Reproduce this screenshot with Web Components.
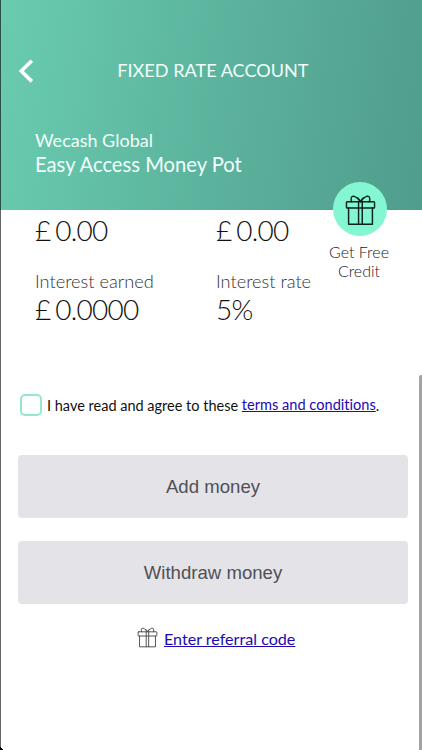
<!DOCTYPE html>
<html lang="en"><head><meta charset="utf-8"><title>Fixed rate account</title>
<style>html,body{margin:0;height:100%;overflow:hidden;background:#fff}</style></head>
<body><account-page></account-page>
<script>
const define=(name,html)=>customElements.define(name,class extends HTMLElement{
  constructor(){super();this.attachShadow({mode:'open'}).innerHTML=html;}
});
define('gift-icon',`<style>:host{display:block}svg{display:block;width:100%;height:100%}</style>
<svg viewBox="0 0 32 34" fill="none" stroke="currentColor" stroke-width="var(--stroke,1.5)" stroke-linejoin="round" stroke-linecap="round">
<rect x="1.5" y="9" width="29" height="6.5" rx=".8"/><path d="M3.7 15.5V32.2H28.3V15.5M14 9V32M17.8 9V32M16 9C12 3.5 6.5 .8 6.3 6.2C6.2 7.3 6.5 8.2 7 9M16 9C20 3.5 25.3 .8 25.6 6.2C25.7 7.3 25.4 8.2 25 9M16 8.5L13.2 5M16 8.5L18.8 5"/></svg>`);
define('top-bar',`<style>:host{display:grid;grid-template-columns:117.3px 1fr;align-items:center;height:30px}
svg{margin:2px 0 0 17px;width:18px;height:26px;display:block}span{font-size:18.1px;line-height:30px;white-space:nowrap}</style>
<svg viewBox="0 0 18 26" fill="none" stroke="#fff" stroke-width="3.6"><path d="M14.8 2.8L4.3 13L14.8 23.4"/></svg><span><slot></slot></span>`);
define('account-header',`<style>:host{display:block;height:210px;box-sizing:border-box;padding-top:55px;color:#f2fffb;background:linear-gradient(98deg,#6acbb0 0%,#65c5aa 15%,#5bb19c 55%,#509d8c 100%)}
.a{margin:43px 0 0 35px;font-size:18px;line-height:25px}.b{margin:-1px 0 0 35px;font-size:20.2px;line-height:24px}span{white-space:nowrap}</style>
<top-bar>FIXED RATE ACCOUNT</top-bar><div class="a"><span><slot name="provider"></slot></span></div><div class="b"><span><slot name="product"></slot></span></div>`);
define('stat-item',`<style>:host{display:block;font-weight:300}.l{font-size:18.2px;line-height:24px;height:24px;color:#333}.v{margin:-1px 0 1px;font-size:28px;line-height:34px;letter-spacing:-.75px;word-spacing:-2px;color:#111}span{white-space:nowrap}</style>
<div class="l"><span><slot name="label"></slot></span></div><div class="v"><span><slot></slot></span></div>`);
define('free-credit',`<style>:host{display:flex;flex-direction:column;align-items:center;width:80px;font-weight:300;font-size:16px;line-height:19px;text-align:center;color:#222}
.c{width:54px;height:54px;border-radius:50%;background:#84f7d2;display:grid;place-items:center;margin-bottom:6px}gift-icon{width:31px;height:33px;color:#0c221c}::slotted(div){margin-left:-2px}</style>
<div class="c"><gift-icon></gift-icon></div><slot></slot>`);
define('terms-row',`<style>:host{display:flex;align-items:center;height:24px;font-size:14.5px;font-variant-ligatures:none;color:#111;white-space:nowrap}i{box-sizing:border-box;width:22px;height:22px;border:2px solid #92e9cb;border-radius:5px;margin-right:5px}
a{color:#2009b5;text-decoration:underline;font-size:14.6px;margin:-2px 0 0 3.7px}</style><i></i><span><slot></slot></span><a><slot name="link"></slot></a><span>.</span>`);
define('action-button',`<style>:host{display:grid;place-items:center;height:63px;border-radius:4px;background:#e4e3e8;color:#505055;font:18.6px "Liberation Sans",Arial,sans-serif}span{white-space:nowrap}</style><span><slot></slot></span>`);
define('referral-link',`<style>:host{display:flex;align-items:center;height:26px;font-size:16.1px}gift-icon{width:21px;height:22px;color:#444;--stroke:1.4;margin:-2px 6px 0 0}a{color:#2009b5;text-decoration:underline;white-space:nowrap}</style><gift-icon></gift-icon><a><slot></slot></a>`);
define('account-page',`<style>:host{display:block;position:relative;width:422px;height:750px;overflow:hidden;background:#fff;font-family:Lato,sans-serif}
.stats{display:grid;grid-template-columns:181px 1fr;margin:-20px 0 0 35px;row-gap:21px;}
.stats,account-header{position:relative}free-credit{position:absolute;left:320px;top:182px}
terms-row{margin:66px 0 0 20px}.buttons{display:grid;gap:23px;margin:38px 14px 0 18px}referral-link{margin:21px 0 0 137px}
.edge{position:absolute;left:0;top:0;width:1px;height:750px;background:#0009}.corner{position:absolute;left:0;bottom:0;width:3px;height:4px;background:linear-gradient(to top right,#000 50%,transparent 52%)}.scroll{position:absolute;left:419px;top:375px;width:3px;height:375px;background:#a4a4a4;border-radius:2px 0 0}
</style>
<account-header><span slot="provider">Wecash Global</span><span slot="product">Easy Access Money Pot</span></account-header>
<div class="stats"><stat-item>£ 0.00</stat-item><stat-item>£ 0.00</stat-item>
<stat-item><span slot="label">Interest earned</span>£ 0.0000</stat-item><stat-item><span slot="label">Interest rate</span>5%</stat-item></div>
<free-credit><div>Get Free<br>Credit</div></free-credit>
<terms-row>I have read and agree to these<span slot="link">terms and conditions</span></terms-row>
<div class="buttons"><action-button>Add money</action-button><action-button>Withdraw money</action-button></div>
<referral-link>Enter referral code</referral-link>
<div class="edge"></div><div class="corner"></div><div class="scroll"></div>`);
</script></body></html>
